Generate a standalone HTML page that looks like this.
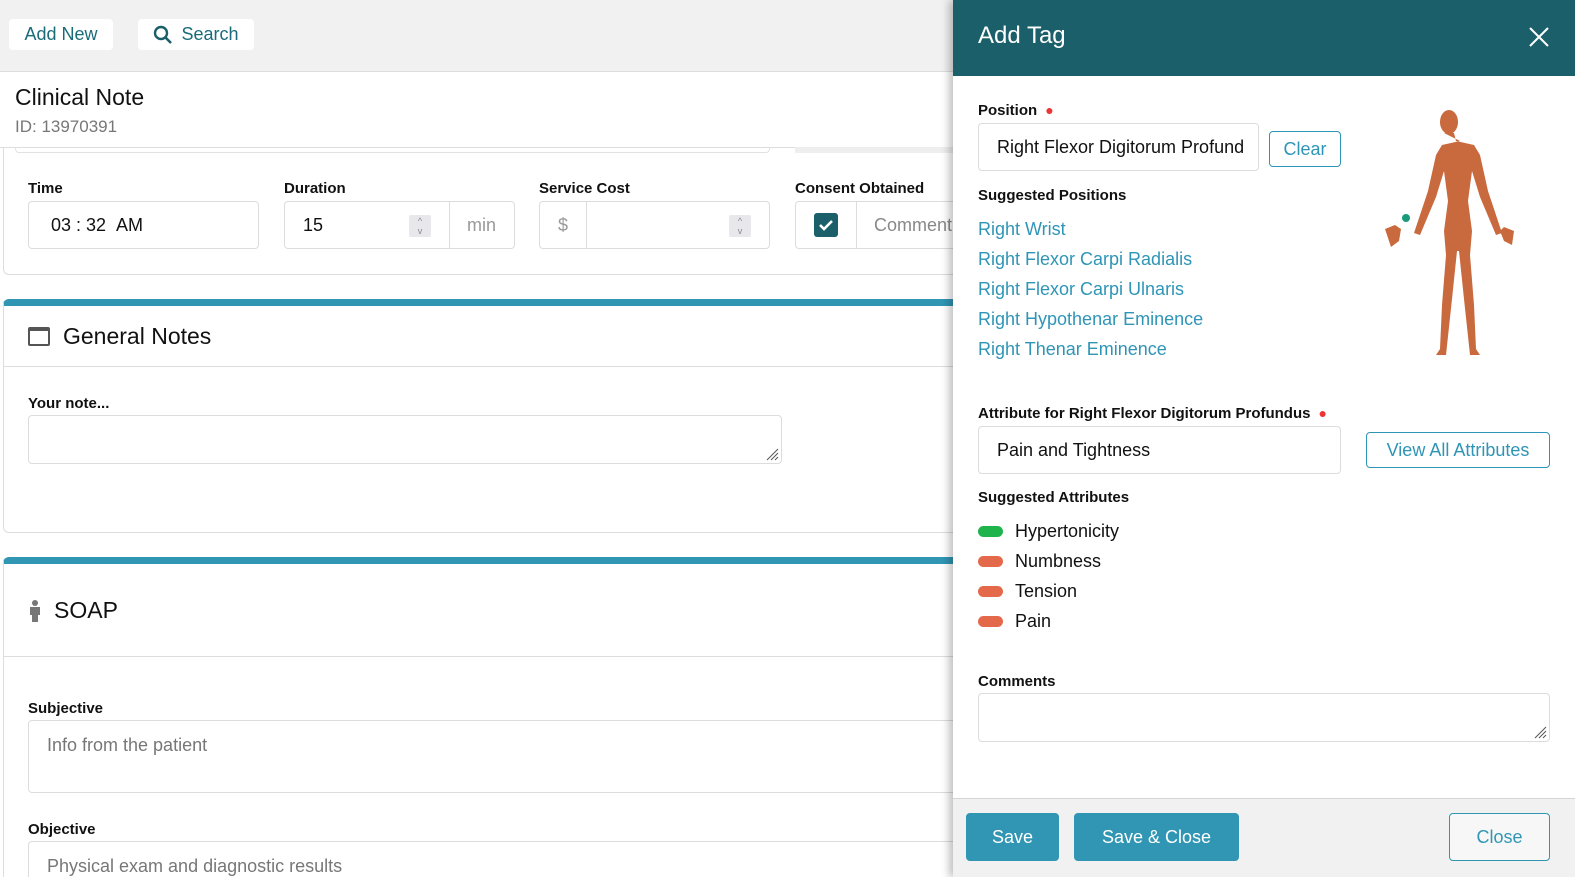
<!DOCTYPE html>
<html><head><meta charset="utf-8"><style>
*{box-sizing:border-box;margin:0;padding:0}
html{width:1575px;height:877px;overflow:hidden}
body{width:1575px;height:877px;overflow:hidden;font-family:"Liberation Sans",sans-serif;background:#fff;position:relative;color:#111}
.a{position:absolute}
.box{position:absolute;border:1px solid #dcdcdc;border-radius:4px;background:#fff}
.lbl{position:absolute;font-size:15px;font-weight:bold;color:#111}
.link{position:absolute;color:#2f95b6;font-size:18px}
.pill{position:absolute;width:25px;height:11px;border-radius:6px}
.btn{position:absolute;border-radius:4px;font-size:18px;display:flex;align-items:center;justify-content:center}
</style></head><body>
<div class="a" style="left:0;top:0;width:960px;height:72px;background:#f1f1f1;border-bottom:1px solid #ddd"></div>
<div class="btn" style="left:9px;top:19px;width:104px;height:31px;background:#fff;color:#1a6b7a;font-size:18px">Add New</div>
<div class="btn" style="left:138px;top:19px;width:116px;height:31px;background:#fff;color:#1a6b7a;font-size:18px">
<svg width="20" height="20" viewBox="0 0 20 20" style="margin-right:8px"><circle cx="8" cy="8" r="6" fill="none" stroke="#1a5f6a" stroke-width="2.4"/><path d="M12.5 12.5L18 18" stroke="#1a5f6a" stroke-width="2.6"/></svg>Search</div>
<div class="a" style="left:15px;top:84px;font-size:23px">Clinical Note</div>
<div class="a" style="left:15px;top:117px;font-size:17px;color:#777">ID: 13970391</div>
<div class="a" style="left:0;top:147px;width:960px;height:1px;background:#ddd"></div>
<div class="a" style="left:15px;top:147px;width:755px;height:6px;border:1px solid #e2e2e2;border-top:none;border-radius:0 0 4px 4px"></div>
<div class="a" style="left:795px;top:147px;width:165px;height:6px;background:#eee"></div>
<div class="a" style="left:3px;top:147px;width:960px;height:128px;border:1px solid #ddd;border-top:none;border-radius:0 0 6px 6px"></div>
<div class="lbl" style="left:28px;top:180px">Time</div>
<div class="lbl" style="left:284px;top:180px">Duration</div>
<div class="lbl" style="left:539px;top:180px">Service Cost</div>
<div class="lbl" style="left:795px;top:180px">Consent Obtained</div>
<div class="box" style="left:28px;top:201px;width:231px;height:48px"><span class="a" style="left:22px;top:13px;font-size:18px">03 : 32 &nbsp;AM</span></div>
<div class="box" style="left:284px;top:201px;width:231px;height:48px"><span class="a" style="left:18px;top:13px;font-size:18px">15</span>
<div class="a" style="left:124px;top:13px;width:22px;height:22px;background:#e8e8ec;border-radius:2px;font-size:9px;color:#888;text-align:center;line-height:10px;padding-top:1px">^<br>v</div>
<div class="a" style="left:164px;top:0;width:1px;height:46px;background:#ddd"></div><span class="a" style="left:182px;top:13px;font-size:18px;color:#999">min</span></div>
<div class="box" style="left:539px;top:201px;width:231px;height:48px"><span class="a" style="left:18px;top:13px;font-size:18px;color:#999">$</span>
<div class="a" style="left:46px;top:0;width:1px;height:46px;background:#ddd"></div>
<div class="a" style="left:189px;top:13px;width:22px;height:22px;background:#e8e8ec;border-radius:2px;font-size:9px;color:#888;text-align:center;line-height:10px;padding-top:1px">^<br>v</div></div>
<div class="box" style="left:795px;top:201px;width:170px;height:48px">
<div class="a" style="left:18px;top:11px;width:24px;height:24px;background:#1a5f6a;border-radius:3px"><svg width="24" height="24"><path d="M6 12l4 4 8-8" stroke="#fff" stroke-width="2.6" fill="none"/></svg></div>
<div class="a" style="left:60px;top:0;width:1px;height:46px;background:#ddd"></div><span class="a" style="left:78px;top:13px;font-size:18px;color:#888">Comment</span></div>

<div class="a" style="left:3px;top:299px;width:960px;height:234px;border:1px solid #ddd;border-top:7px solid #3196b4;border-radius:6px"></div>
<div class="a" style="left:3px;top:366px;width:960px;height:1px;background:#ddd"></div>
<div class="a" style="left:28px;top:327px;width:22px;height:19px;border:2px solid #555;border-top-width:4px;border-radius:2px"></div>
<div class="a" style="left:63px;top:323px;font-size:23px">General Notes</div>
<div class="lbl" style="left:28px;top:395px">Your note...</div>
<div class="box" style="left:28px;top:415px;width:754px;height:49px"><svg class="a" style="right:2px;bottom:2px" width="16" height="16"><path d="M4 15L15 4M8 15L15 8M12 15L15 12" stroke="#555"/></svg></div>

<div class="a" style="left:3px;top:557px;width:960px;height:330px;border:1px solid #ddd;border-top:7px solid #3196b4;border-radius:6px"></div>
<div class="a" style="left:3px;top:656px;width:960px;height:1px;background:#ddd"></div>
<svg class="a" style="left:27px;top:599px" width="16" height="24"><circle cx="8" cy="4" r="3" fill="#777"/><path d="M3 8h10v8h-2v7H5v-7H3z" fill="#777"/></svg>
<div class="a" style="left:54px;top:597px;font-size:23px">SOAP</div>
<div class="lbl" style="left:28px;top:700px">Subjective</div>
<div class="box" style="left:28px;top:720px;width:940px;height:73px"><span class="a" style="left:18px;top:14px;font-size:18px;color:#777">Info from the patient</span></div>
<div class="lbl" style="left:28px;top:821px">Objective</div>
<div class="box" style="left:28px;top:841px;width:940px;height:60px"><span class="a" style="left:18px;top:14px;font-size:18px;color:#777">Physical exam and diagnostic results</span></div>

<div class="a" style="left:953px;top:0;width:622px;height:877px;background:#fff;box-shadow:-4px 0 8px rgba(0,0,0,.25)"></div>
<div class="a" style="left:953px;top:0;width:622px;height:76px;background:#1a5f6a"></div>
<div class="a" style="left:978px;top:22px;font-size:24px;color:#fff">Add Tag</div>
<svg class="a" style="left:1528px;top:26px" width="22" height="22"><path d="M2 2L20 20M20 2L2 20" stroke="#fff" stroke-width="2"/></svg>
<div class="lbl" style="left:978px;top:102px">Position <span style="color:#e33;font-size:14px">&nbsp;●</span></div>
<div class="box" style="left:978px;top:123px;width:281px;height:48px;overflow:hidden"><span class="a" style="left:18px;top:13px;font-size:18px;white-space:nowrap">Right Flexor Digitorum Profund</span></div>
<div class="btn" style="left:1269px;top:131px;width:72px;height:36px;border:1px solid #2f95b6;color:#2f95b6">Clear</div>
<div class="lbl" style="left:978px;top:187px">Suggested Positions</div>
<div class="link" style="left:978px;top:219px">Right Wrist</div>
<div class="link" style="left:978px;top:249px">Right Flexor Carpi Radialis</div>
<div class="link" style="left:978px;top:279px">Right Flexor Carpi Ulnaris</div>
<div class="link" style="left:978px;top:309px">Right Hypothenar Eminence</div>
<div class="link" style="left:978px;top:339px">Right Thenar Eminence</div>
<svg class="a" style="left:1380px;top:105px" width="140" height="250" viewBox="0 0 140 250">
<g fill="#c9693e">
<ellipse cx="69" cy="17" rx="9" ry="12"/>
<path d="M64 28h10l2 8 18 4 6 10 8 36 14 42-6 2-16-38-8-26-4 30 4 30-2 24 4 50 2 44 4 6h-10l-6-56-5-48h-2l-5 48-6 56h-10l4-6 2-44 4-50-2-24 4-30-4-30-8 26-16 38-6-2 14-42 8-36 6-10 18-4z"/>
<path d="M5 124l10-4 6 4-2 12-8 6z"/><path d="M124 122l10 4-2 14-8-4-4-10z"/>
</g>
<circle cx="26" cy="113" r="4" fill="#1a9a7a"/>
</svg>
<div class="lbl" style="left:978px;top:405px">Attribute for Right Flexor Digitorum Profundus <span style="color:#e33;font-size:14px">&nbsp;●</span></div>
<div class="box" style="left:978px;top:426px;width:363px;height:48px"><span class="a" style="left:18px;top:13px;font-size:18px">Pain and Tightness</span></div>
<div class="btn" style="left:1366px;top:432px;width:184px;height:36px;border:1px solid #2f95b6;color:#2f95b6">View All Attributes</div>
<div class="lbl" style="left:978px;top:489px">Suggested Attributes</div>
<div class="pill" style="left:978px;top:526px;background:#1fb34c"></div><div class="a" style="left:1015px;top:521px;font-size:18px">Hypertonicity</div>
<div class="pill" style="left:978px;top:556px;background:#e3694a"></div><div class="a" style="left:1015px;top:551px;font-size:18px">Numbness</div>
<div class="pill" style="left:978px;top:586px;background:#e3694a"></div><div class="a" style="left:1015px;top:581px;font-size:18px">Tension</div>
<div class="pill" style="left:978px;top:616px;background:#e3694a"></div><div class="a" style="left:1015px;top:611px;font-size:18px">Pain</div>
<div class="lbl" style="left:978px;top:673px">Comments</div>
<div class="box" style="left:978px;top:693px;width:572px;height:49px"><svg class="a" style="right:2px;bottom:2px" width="16" height="16"><path d="M4 15L15 4M8 15L15 8M12 15L15 12" stroke="#555"/></svg></div>
<div class="a" style="left:953px;top:798px;width:622px;height:79px;background:#f1f1f1;border-top:1px solid #d5d5d5"></div>
<div class="btn" style="left:966px;top:813px;width:93px;height:48px;background:#3196b4;color:#fff">Save</div>
<div class="btn" style="left:1074px;top:813px;width:165px;height:48px;background:#3196b4;color:#fff">Save &amp; Close</div>
<div class="btn" style="left:1449px;top:813px;width:101px;height:48px;border:1px solid #3196b4;color:#3196b4;background:#f7f7f7">Close</div>
</body></html>
